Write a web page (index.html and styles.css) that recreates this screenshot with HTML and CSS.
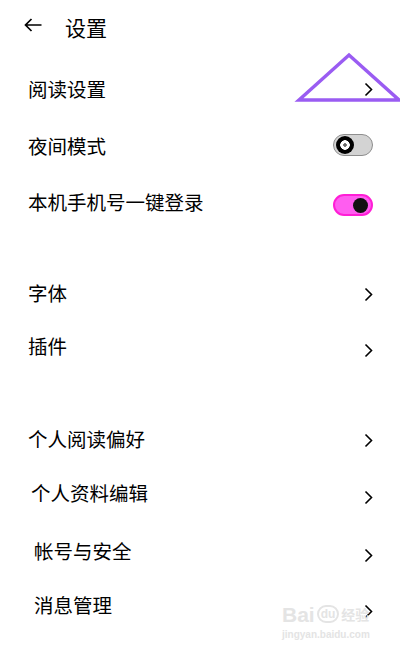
FILE: index.html
```html
<!DOCTYPE html>
<html lang="zh">
<head>
<meta charset="utf-8">
<title>设置</title>
<link rel="stylesheet" href="styles.css">
</head>
<body>
<div class="page">
  <header class="header">
    <svg class="back" width="18" height="14" viewBox="0 0 18 14"><path d="M1.5 7H17.5M7.5 1L1.5 7L7.5 13" fill="none" stroke="#000" stroke-width="1.7"/></svg>
    <h1 class="title">设置</h1>
  </header>

  <div class="row r1"><span class="label">阅读设置</span><svg class="chev" width="9" height="15" viewBox="0 0 9 15"><path d="M1.5 1.5L7.5 7.5L1.5 13.5" fill="none" stroke="#000" stroke-width="1.6"/></svg></div>
  <div class="row r2"><span class="label">夜间模式</span><span class="toggle off"><span class="knob"></span></span></div>
  <div class="row r3"><span class="label">本机手机号一键登录</span><span class="toggle on"><span class="knob"></span></span></div>

  <div class="spacer s1"></div>

  <div class="row r4"><span class="label">字体</span><svg class="chev d1" width="9" height="15" viewBox="0 0 9 15"><path d="M1.5 1.5L7.5 7.5L1.5 13.5" fill="none" stroke="#000" stroke-width="1.6"/></svg></div>
  <div class="row r5"><span class="label">插件</span><svg class="chev d4" width="9" height="15" viewBox="0 0 9 15"><path d="M1.5 1.5L7.5 7.5L1.5 13.5" fill="none" stroke="#000" stroke-width="1.6"/></svg></div>

  <div class="spacer s2"></div>

  <div class="row r6"><span class="label">个人阅读偏好</span><svg class="chev d1" width="9" height="15" viewBox="0 0 9 15"><path d="M1.5 1.5L7.5 7.5L1.5 13.5" fill="none" stroke="#000" stroke-width="1.6"/></svg></div>
  <div class="row r7"><span class="label in3">个人资料编辑</span><svg class="chev d4" width="9" height="15" viewBox="0 0 9 15"><path d="M1.5 1.5L7.5 7.5L1.5 13.5" fill="none" stroke="#000" stroke-width="1.6"/></svg></div>
  <div class="row r8"><span class="label in6">帐号与安全</span><svg class="chev d4" width="9" height="15" viewBox="0 0 9 15"><path d="M1.5 1.5L7.5 7.5L1.5 13.5" fill="none" stroke="#000" stroke-width="1.6"/></svg></div>
  <div class="row r9"><span class="label in6">消息管理</span><svg class="chev d6" width="9" height="15" viewBox="0 0 9 15"><path d="M1.5 1.5L7.5 7.5L1.5 13.5" fill="none" stroke="#000" stroke-width="1.6"/></svg></div>

  <svg class="mark" width="110" height="52" viewBox="0 0 110 52"><path d="M4 48L54 3L104 48Z" fill="none" stroke="#9a5cf2" stroke-width="3.5" stroke-linejoin="miter"/></svg>

  <div class="watermark">
    <div class="wm-top"><span class="wm-bai">Bai</span><span class="wm-du">du</span><span class="wm-cn">经验</span></div>
    <div class="wm-url">jingyan.baidu.com</div>
  </div>
</div>
</body>
</html>
```

FILE: styles.css
```css
* { box-sizing: border-box; }
html, body { margin: 0; padding: 0; background: #fff; }
body {
  font-family: "Noto Sans CJK SC", "Noto Sans", sans-serif;
  color: #000;
  width: 400px;
  height: 651px;
  overflow: hidden;
}
.page { position: relative; width: 400px; height: 651px; }

.header {
  height: 50px;
  display: flex;
  align-items: center;
  padding-left: 24px;
}
.back { display: block; }
.title {
  margin: 4px 0 0 23px;
  font-size: 21px;
  font-weight: 400;
  line-height: 1;
}

.row {
  display: flex;
  align-items: center;
  justify-content: space-between;
  padding: 0 27px 0 28px;
}
.label { font-size: 19.5px; line-height: 1; }
.in3 { margin-left: 3px; }
.in6 { margin-left: 6px; }

.r1 { height: 56px; margin-top: 11px; }
.r2 { height: 58px; }
.r3 { height: 54px; }
.s1 { height: 36px; }
.r4 { height: 56px; }
.r5 { height: 50px; }
.s2 { height: 40px; }
.r6 { height: 56px; }
.r7 { height: 52px; }
.r8 { height: 64px; }
.r9 { height: 44px; }

.chev { display: block; flex: none; }
.d1 { margin-top: 2px; }
.d4 { margin-top: 8px; }
.d6 { margin-top: 12px; }

.toggle {
  position: relative;
  width: 40px;
  height: 22px;
  border-radius: 11px;
  flex: none;
}
.toggle.off { background: #d3d3d3; border: 1.5px solid #8e8e8e; margin-top: -2px; }
.toggle.on { background: #ff5df0; border: 2px solid #ff1ed6; margin-top: 6px; }
.toggle .knob {
  position: absolute;
  top: 50%;
  border-radius: 50%;
}
.toggle.off .knob {
  left: 1.5px;
  width: 18px;
  height: 18px;
  margin-top: -9px;
  background: radial-gradient(circle, #666 0 1.5px, #fff 2px 4.5px, #000 5px);
}
.toggle.on .knob {
  right: 3px;
  width: 15px;
  height: 15px;
  margin-top: -7.5px;
  background: #111;
}

.mark {
  position: absolute;
  left: 295px;
  top: 52px;
  overflow: visible;
}

.watermark {
  position: absolute;
  left: 282px;
  top: 603px;
  color: #e4e4e4;
  font-family: "Liberation Sans", "Noto Sans CJK SC", sans-serif;
  pointer-events: none;
}
.wm-top { display: flex; align-items: center; gap: 2px; height: 22px; }
.wm-bai { font-size: 21px; font-weight: 700; line-height: 1; }
.wm-du {
  font-size: 12px;
  font-weight: 700;
  line-height: 1;
  border: 2px solid #e4e4e4;
  border-radius: 9px;
  padding: 1px 2px;
}
.wm-cn { font-size: 14px; font-weight: 700; line-height: 1; font-family: "Noto Sans CJK SC", sans-serif; }
.wm-url { font-size: 10px; font-weight: 700; line-height: 1; margin-top: 5px; }
```
